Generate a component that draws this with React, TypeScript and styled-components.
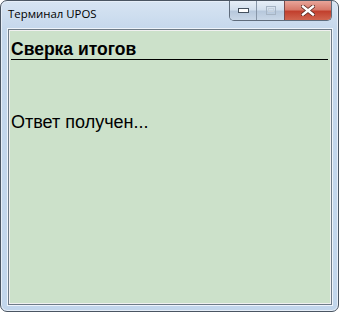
import React from "react";
import styled, { createGlobalStyle } from "styled-components";

const Global = createGlobalStyle`
  html, body {
    margin: 0;
    padding: 0;
    background: #ffffff;
  }
`;

const Window = styled.div`
  box-sizing: border-box;
  width: 339px;
  height: 312px;
  display: flex;
  flex-direction: column;
  border: 1px solid #4a5562;
  border-radius: 7px;
  background: linear-gradient(to bottom, #d7e4f2 0px, #c4d7ec 30px, #c2d6ec 100%);
  box-shadow: inset 0 0 0 1px #e6eef8;
  overflow: hidden;
`;

const TitleBar = styled.div`
  height: 28px;
  display: flex;
  align-items: flex-start;
  justify-content: space-between;
  padding: 0 6px 0 7px;
  flex-shrink: 0;
`;

const Title = styled.span`
  font-family: "Open Sans", "Noto Sans", sans-serif;
  font-size: 11.4px;
  color: #000000;
  line-height: 1;
  margin-top: 7px;
`;

const Caption = styled.div`
  display: flex;
  height: 19px;
  border: 1px solid #5f6c7c;
  border-top: none;
  border-radius: 0 0 5px 5px;
  overflow: hidden;
`;

const CapButton = styled.div<{ $w: number; $close?: boolean }>`
  width: ${(p) => p.$w}px;
  height: 100%;
  display: flex;
  align-items: center;
  justify-content: center;
  border-left: ${(p) => (p.$close ? "1px solid #7b4a4a" : "1px solid #8796a8")};
  background: ${(p) =>
    p.$close
      ? "linear-gradient(to bottom, #e8a59a 0%, #d77a6b 45%, #c2402e 55%, #d0654f 100%)"
      : "linear-gradient(to bottom, #e6eef7 0%, #d3e0ee 45%, #b7c8dc 55%, #c9d7e7 100%)"};
  &:first-child {
    border-left: none;
  }
`;

const Client = styled.div`
  flex: 1;
  margin: 0 6px 6px 7px;
  border: 1px solid #6e7b88;
  box-shadow: 0 0 0 1px #eef4fb;
  background: #f0f0f0;
  padding: 1px;
  display: flex;
`;

const Panel = styled.div`
  flex: 1;
  background: #cce1ca;
  padding: 8px 2px 0 1px;
  font-family: "Liberation Sans", Arial, sans-serif;
  color: #000000;
`;

const Heading = styled.div`
  font-size: 17.5px;
  font-weight: bold;
  line-height: 20px;
  border-bottom: 1px solid #000000;
`;

const Status = styled.div`
  font-size: 18px;
  line-height: 22px;
  margin-top: 51px;
`;

export default function App() {
  return (
    <>
      <Global />
      <Window>
        <TitleBar>
          <Title>Терминал UPOS</Title>
          <Caption>
            <CapButton $w={26}>
              <svg width="11" height="5" viewBox="0 0 11 5">
                <rect x="0.5" y="0.5" width="10" height="4" fill="#ffffff" stroke="#44505e" />
              </svg>
            </CapButton>
            <CapButton $w={27}>
              <svg width="10" height="9" viewBox="0 0 10 9">
                <rect x="0.5" y="0.5" width="9" height="8" fill="none" stroke="#a6b4c4" />
                <rect x="2.5" y="2.5" width="5" height="3" fill="none" stroke="#c6d1dd" />
              </svg>
            </CapButton>
            <CapButton $w={46} $close>
              <svg width="14" height="11" viewBox="0 0 14 11">
                <path
                  d="M2 1.5 L12 9.5 M12 1.5 L2 9.5"
                  stroke="#5a2a22"
                  strokeWidth="4"
                  strokeLinecap="square"
                />
                <path
                  d="M2 1.5 L12 9.5 M12 1.5 L2 9.5"
                  stroke="#ffffff"
                  strokeWidth="2.4"
                  strokeLinecap="square"
                />
              </svg>
            </CapButton>
          </Caption>
        </TitleBar>
        <Client>
          <Panel>
            <Heading>Сверка итогов</Heading>
            <Status>Ответ получен...</Status>
          </Panel>
        </Client>
      </Window>
    </>
  );
}
